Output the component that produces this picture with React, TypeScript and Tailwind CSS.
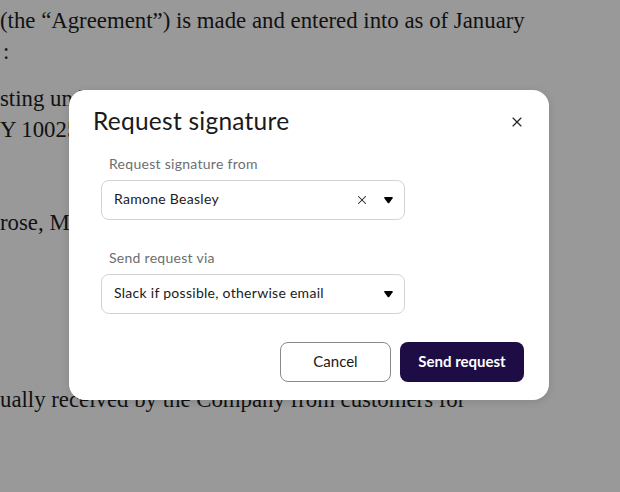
import { X } from 'lucide-react'

const serif = { fontFamily: '"Liberation Serif", "Times New Roman", serif' }

function Caret() {
  return (
    <svg width="9" height="8" viewBox="0 0 10 9" className="text-black">
      <path d="M1 1.2 C0.2 1.2 0 2 0.5 2.7 L4.2 7.8 C4.6 8.3 5.4 8.3 5.8 7.8 L9.5 2.7 C10 2 9.8 1.2 9 1.2 Z" fill="currentColor" />
    </svg>
  )
}

function Field({ label, value, clearable }: { label: string; value: string; clearable?: boolean }) {
  return (
    <div className="flex flex-col">
      <span className="pl-2 text-[14px] leading-5 text-[#6e6e6e] tracking-[0.02em]">{label}</span>
      <div className="mt-[6px] flex h-[40px] w-[304px] items-center rounded-[8px] border border-[#d3d3d3] pl-[12px] pr-[11px]">
        <span className="flex-1 pb-[3px] text-[14px] text-[#1a1a1a] tracking-[0.02em]">{value}</span>
        {clearable && <X size={14} strokeWidth={1.75} className="mr-[15px] text-[#222]" />}
        <Caret />
      </div>
    </div>
  )
}

export default function App() {
  return (
    <div className="relative h-[492px] w-[620px] overflow-hidden bg-[#999999]">
      {/* Document behind the overlay */}
      <div className="text-[22.8px] leading-[31px] text-[#111] whitespace-nowrap" style={serif}>
        <p className="pt-[5px]">(the “Agreement”) is made and entered into as of January</p>
        <p className="pl-[3px]">:</p>
        <p className="mt-[16px]">sting under the laws of New York, with its principal place</p>
        <p>Y 10025.</p>
        <p className="mt-[62px]">rose, Manhattan</p>
        <p className="mt-[146px]">ually received by the Company from customers for</p>
      </div>

      {/* Modal */}
      <div
        className="absolute left-[69px] top-[90px] flex h-[310px] w-[480px] flex-col rounded-[16px] bg-white shadow-[0_2px_8px_rgba(0,0,0,0.12)]"
        style={{ fontFamily: 'Lato, "Noto Sans", sans-serif' }}
      >
        <div className="flex items-center justify-between pl-[24px] pr-[24px] pt-[15px]">
          <h2 className="text-[24.5px] leading-[32px] text-[#1a1a1a] tracking-[0.01em]">Request signature</h2>
          <X size={16} strokeWidth={1.75} className="mt-[2px] text-[#222]" />
        </div>
        <div className="mt-[17px] flex flex-col gap-[28px] pl-[32px]">
          <Field label="Request signature from" value="Ramone Beasley" clearable />
          <Field label="Send request via" value="Slack if possible, otherwise email" />
        </div>
        <div className="mt-[28px] flex justify-end gap-[9px] pr-[25px]">
          <button className="h-[40px] w-[111px] rounded-[8px] border border-[#8a8a8a] bg-white pb-[1px] text-[15px] text-[#1a1a1a]">
            Cancel
          </button>
          <button className="h-[40px] w-[124px] rounded-[8px] bg-[#1e0d45] pb-[1px] text-[15px] font-bold text-white">
            Send request
          </button>
        </div>
      </div>
    </div>
  )
}
